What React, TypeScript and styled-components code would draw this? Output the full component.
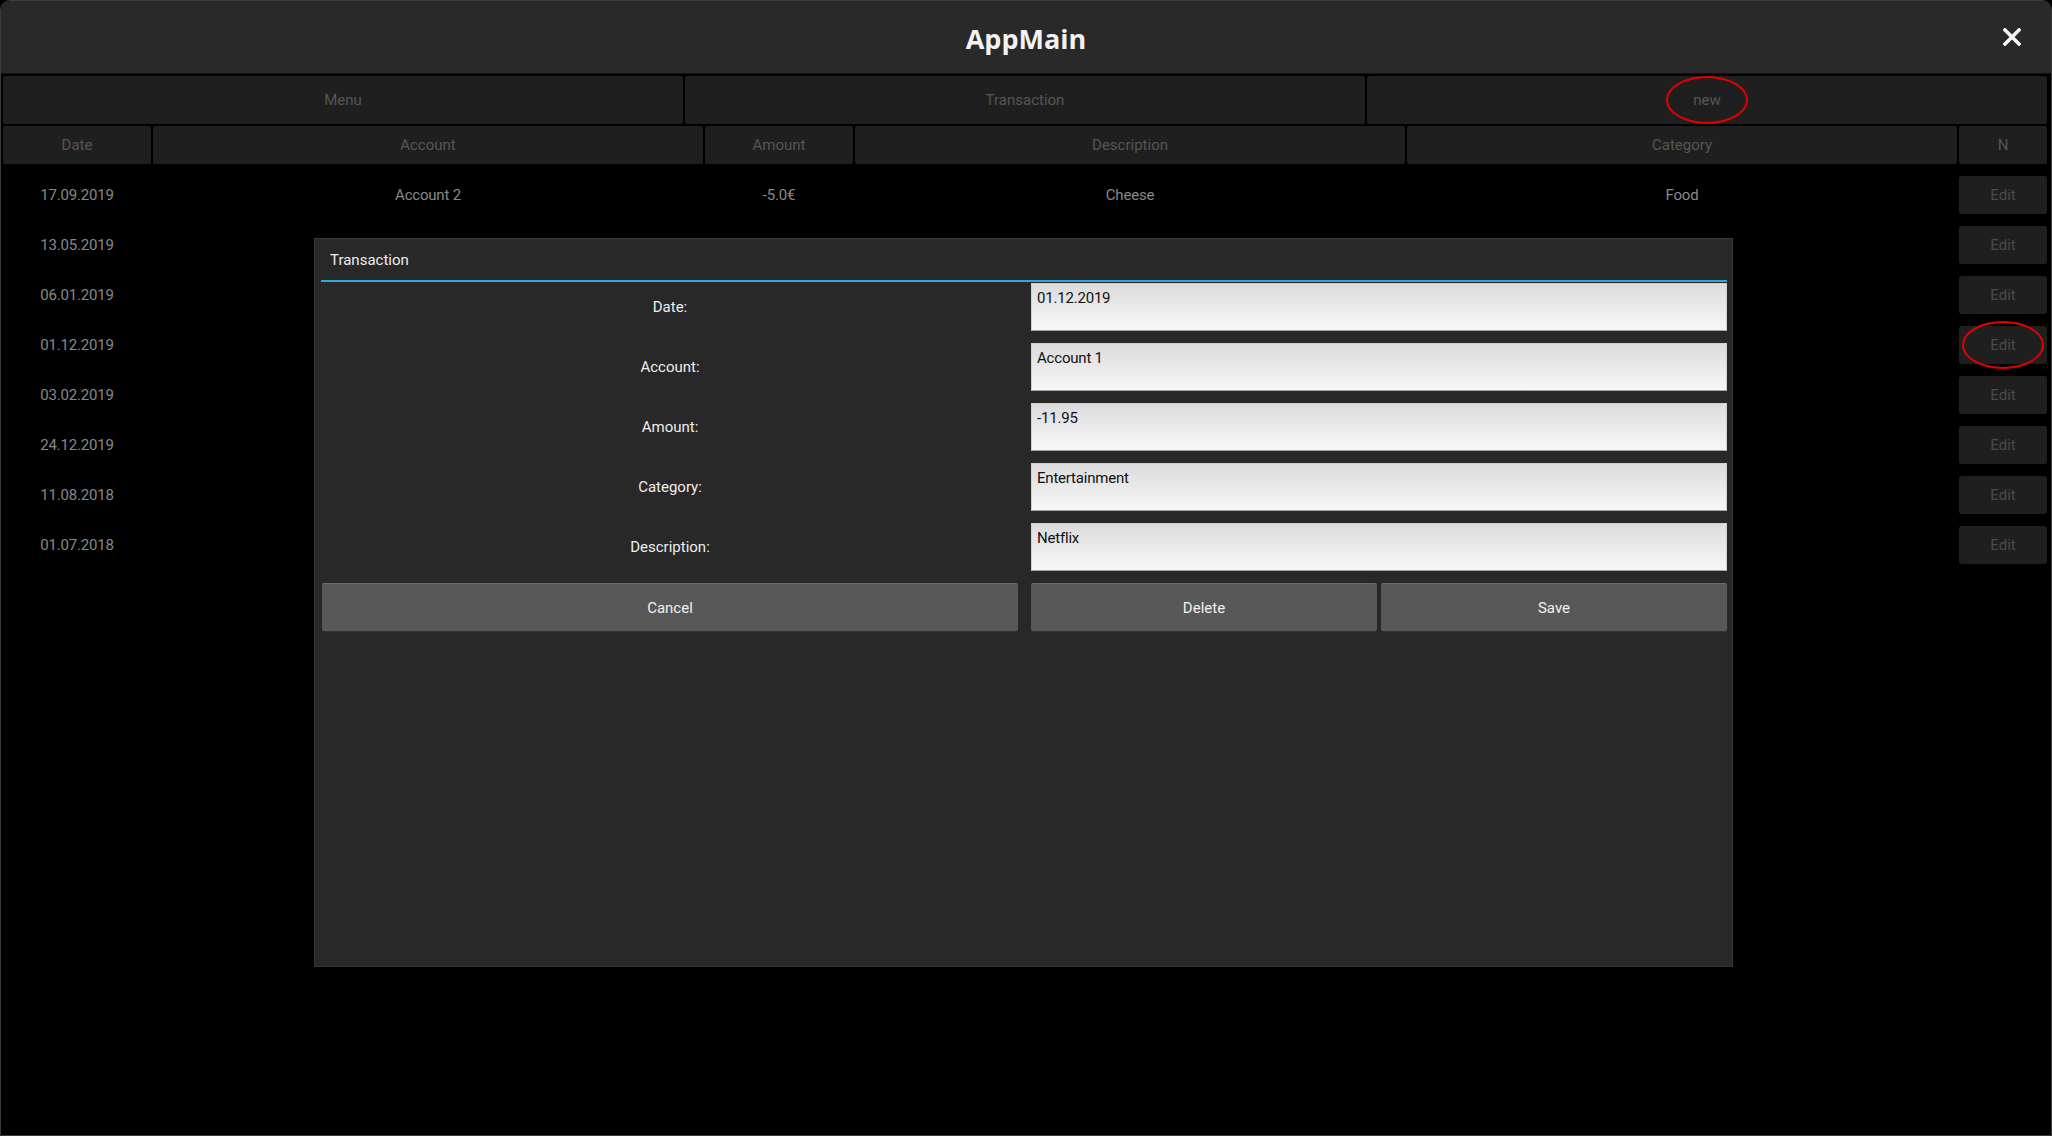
import React from 'react';
import styled, { createGlobalStyle } from 'styled-components';

const GlobalStyle = createGlobalStyle`
  html, body {
    margin: 0;
    padding: 0;
    background: #000;
    font-family: Roboto, "Liberation Sans", sans-serif;
  }
  * {
    box-sizing: border-box;
  }
`;

const COLUMNS = '148px 550px 148px 550px 550px 88px';

const Window = styled('div')`
  display: flex;
  flex-direction: column;
  width: 2052px;
  height: 1136px;
  background: #000;
  border: 1px solid #3b3b3b;
  border-radius: 10px 10px 0 0;
  overflow: hidden;
`;

const TitleBar = styled('div')`
  display: grid;
  grid-template-columns: 1fr auto 1fr;
  align-items: center;
  height: 73px;
  flex-shrink: 0;
  background: #292929;
  border-bottom: 1px solid #121212;
`;

const Title = styled('div')`
  grid-column: 2;
  font-family: "Open Sans", "DejaVu Sans", sans-serif;
  font-weight: 700;
  font-size: 27px;
  color: #f2f2f2;
  padding-top: 2px;
`;

const CloseButton = styled('button')`
  grid-column: 3;
  justify-self: end;
  margin-right: 30px;
  padding: 0;
  background: none;
  border: none;
  display: flex;
`;

const Body = styled('div')`
  position: relative;
  flex: 1;
  display: flex;
  flex-direction: column;
  padding: 2px 4px 0 2px;
`;

const NavBar = styled('div')`
  display: grid;
  grid-template-columns: 1fr 1fr 1fr;
  gap: 2px;
  height: 48px;
`;

const Cell = styled('div')`
  position: relative;
  display: flex;
  align-items: center;
  justify-content: center;
  background: #1f1f1f;
  border-radius: 2px;
  color: #565656;
  font-size: 15px;
`;

const HeaderRow = styled('div')`
  display: grid;
  grid-template-columns: ${COLUMNS};
  gap: 2px;
  height: 38px;
  margin-top: 2px;
`;

const RowList = styled('div')`
  display: flex;
  flex-direction: column;
  gap: 12px;
  padding-top: 12px;
`;

const Row = styled('div')`
  display: grid;
  grid-template-columns: ${COLUMNS};
  gap: 2px;
  height: 38px;
`;

const RowText = styled('div')`
  display: flex;
  align-items: center;
  justify-content: center;
  color: #888888;
  font-size: 15px;
  letter-spacing: -0.2px;
`;

const EditButton = styled('div')`
  position: relative;
  display: flex;
  align-items: center;
  justify-content: center;
  background: #1f1f1f;
  border-radius: 3px;
  color: #4a4a4a;
  font-size: 15px;
`;

const Marker = styled('span')`
  position: absolute;
  left: 50%;
  top: 50%;
  width: 82px;
  height: 48px;
  transform: translate(-50%, -50%);
  border: 2.5px solid #e40000;
  border-radius: 50%;
  pointer-events: none;
`;

const Overlay = styled('div')`
  position: absolute;
  inset: 0;
  display: flex;
  align-items: center;
  justify-content: center;
`;

const Dialog = styled('div')`
  display: flex;
  flex-direction: column;
  width: 1419px;
  height: 729px;
  margin-left: -5px;
  margin-top: -4px;
  background: #282828;
  border: 1px solid #353535;
  border-top-color: #3c3c3c;
`;

const DialogTitle = styled('div')`
  height: 41px;
  padding: 0 0 0 15px;
  display: flex;
  align-items: center;
  color: #ededed;
  font-size: 15px;
`;

const Separator = styled('div')`
  height: 2px;
  margin: 0 5px 0 6px;
  background: #2fa8d6;
`;

const Form = styled('div')`
  display: grid;
  grid-template-columns: 1fr 1fr;
  grid-auto-rows: 48px;
  column-gap: 13px;
  row-gap: 12px;
  padding: 1px 5px 0 7px;
`;

const Label = styled('div')`
  display: flex;
  align-items: center;
  justify-content: center;
  color: #eeeeee;
  font-size: 15px;
`;

const Input = styled('div')`
  padding: 5px 5px;
  background: linear-gradient(#dbdbdb, #f8f8f8);
  border: 1px solid #cfcfcf;
  border-bottom-color: #a6a6a6;
  color: #111;
  font-size: 15px;
  letter-spacing: -0.2px;
`;

const ButtonPair = styled('div')`
  display: grid;
  grid-template-columns: 1fr 1fr;
  gap: 4px;
`;

const Button = styled('button')`
  display: flex;
  align-items: center;
  justify-content: center;
  margin: 0;
  background: #585858;
  border: none;
  border-top: 1px solid #6c6c6c;
  border-radius: 2px;
  box-shadow: 0 1px 0 #333;
  color: #f0f0f0;
  font-family: Roboto, "Liberation Sans", sans-serif;
  font-size: 15px;
`;

// only the first row is visible beside the dialog, the rest are hidden behind it
const transactions = [
  { date: '17.09.2019', account: 'Account 2', amount: '-5.0€', description: 'Cheese', category: 'Food' },
  { date: '13.05.2019' },
  { date: '06.01.2019' },
  { date: '01.12.2019' },
  { date: '03.02.2019' },
  { date: '24.12.2019' },
  { date: '11.08.2018' },
  { date: '01.07.2018' },
] as { date: string; account?: string; amount?: string; description?: string; category?: string }[];

const fields = [
  { label: 'Date:', value: '01.12.2019' },
  { label: 'Account:', value: 'Account 1' },
  { label: 'Amount:', value: '-11.95' },
  { label: 'Category:', value: 'Entertainment' },
  { label: 'Description:', value: 'Netflix' },
];

const CloseIcon = () => (
  <svg width="18" height="18" viewBox="0 0 18 18">
    <path d="M2 2 L16 16 M16 2 L2 16" stroke="#f5f5f5" strokeWidth="3.6" strokeLinecap="square" />
  </svg>
);

const App: React.FC = () => {
  return (
    <>
      <GlobalStyle />
      <Window>
        <TitleBar>
          <Title>AppMain</Title>
          <CloseButton>
            <CloseIcon />
          </CloseButton>
        </TitleBar>
        <Body>
          <NavBar>
            <Cell>Menu</Cell>
            <Cell>Transaction</Cell>
            <Cell>
              new
              <Marker />
            </Cell>
          </NavBar>
          <HeaderRow>
            <Cell>Date</Cell>
            <Cell>Account</Cell>
            <Cell>Amount</Cell>
            <Cell>Description</Cell>
            <Cell>Category</Cell>
            <Cell>N</Cell>
          </HeaderRow>
          <RowList>
            {transactions.map((t, i) => (
              <Row key={t.date + i}>
                <RowText>{t.date}</RowText>
                <RowText>{t.account}</RowText>
                <RowText>{t.amount}</RowText>
                <RowText>{t.description}</RowText>
                <RowText>{t.category}</RowText>
                <EditButton>
                  Edit
                  {i === 3 && <Marker />}
                </EditButton>
              </Row>
            ))}
          </RowList>
          <Overlay>
            <Dialog>
              <DialogTitle>Transaction</DialogTitle>
              <Separator />
              <Form>
                {fields.map((f) => (
                  <React.Fragment key={f.label}>
                    <Label>{f.label}</Label>
                    <Input>{f.value}</Input>
                  </React.Fragment>
                ))}
                <Button>Cancel</Button>
                <ButtonPair>
                  <Button>Delete</Button>
                  <Button>Save</Button>
                </ButtonPair>
              </Form>
            </Dialog>
          </Overlay>
        </Body>
      </Window>
    </>
  );
};

export default App;
